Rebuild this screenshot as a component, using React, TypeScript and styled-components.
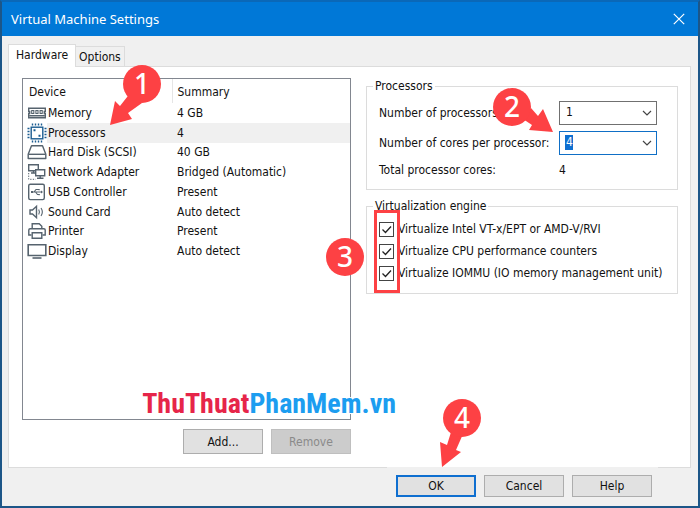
import React from "react";
import styled, { createGlobalStyle, css } from "styled-components";

const uiFont = `"DejaVu Sans Condensed", "Noto Sans", sans-serif`;
const titleFont = `"Noto Sans", "Open Sans", sans-serif`;
const red = "#fd4144";

const GlobalStyle = createGlobalStyle`
  * { box-sizing: border-box; }
  body {
    margin: 0;
    background: #1c5688;
    color: #111;
    font: 12px/16px ${uiFont};
  }
  button, select, input { font: inherit; color: inherit; }
`;

const Dialog = styled.main`
  display: flex;
  flex-direction: column;
  min-height: 100vh;
  border: 2px solid #1c5688;
  border-top-color: #0a68b8;
  background: #f0f0f0;
`;

const TitleBar = styled.header`
  display: flex;
  align-items: center;
  justify-content: space-between;
  height: 34px;
  padding: 0 13px 0 9px;
  background: #0078d7;
  color: #fff;
`;

const Title = styled.h1`
  margin: 0;
  font: 400 13px/20px ${titleFont};
`;

const CloseButton = styled.button`
  display: flex;
  padding: 0;
  border: 0;
  background: none;
  color: #fff;
`;

const Body = styled.div`
  display: flex;
  flex: 1;
  flex-direction: column;
  padding: 8px 7px 9px 6px;
`;

const TabList = styled.div`
  display: flex;
  align-items: flex-end;
  height: 22px;
`;

const Tab = styled.button<{ $active?: boolean }>`
  height: 20px;
  padding: 0 3px;
  border: 1px solid #dcdcdc;
  border-left: 0;
  border-bottom: 0;
  background: #f0f0f0;
  ${(p) =>
    p.$active &&
    css`
      z-index: 1;
      height: 23px;
      margin-bottom: -1px;
      padding: 0 7px 2px;
      border-left: 1px solid #dcdcdc;
      background: #fff;
    `}
`;

const TabPanel = styled.section`
  display: grid;
  flex: 1;
  grid-template-columns: minmax(0, 329fr) minmax(0, 312fr);
  column-gap: 15px;
  padding: 12px 12px 13px 13px;
  border: 1px solid #dcdcdc;
  border-top: 0;
  background: #fff;
  box-shadow: inset 0 1px #dcdcdc;
`;

const DevicePane = styled.div`
  display: flex;
  flex-direction: column;
`;

const DeviceList = styled.div`
  position: relative;
  flex: 1;
  border: 1px solid #828790;
`;

const DeviceTable = styled.table`
  width: 100%;
  border-collapse: collapse;
  table-layout: fixed;
`;

const HeadCell = styled.th`
  height: 24px;
  padding: 2px 0 0 5px;
  font-weight: 400;
  text-align: left;
  &:first-child {
    width: 149px;
    padding-left: 6px;
    border-right: 1px solid #e5e5e5;
  }
`;

const DeviceRows = styled.tbody`
  height: 158px;
`;

const DeviceCell = styled.td<{ $selected: boolean }>`
  position: relative;
  padding: 0 0 0 4px;
  background: ${(p) =>
    p.$selected ? "linear-gradient(to right, transparent 24px, #f0f0f0 24px)" : "none"};
`;

const SummaryCell = styled.td<{ $selected: boolean }>`
  padding: 0 0 0 5px;
  background: ${(p) => (p.$selected ? "#f0f0f0" : "none")};
`;

const DeviceName = styled.div`
  display: flex;
  align-items: center;
  gap: 1px;
  height: 16px;
`;

const DeviceIcon = styled.svg`
  flex: none;
  width: 20px;
  height: 20px;
  fill: none;
  stroke: #56636e;
  stroke-width: 1.4;
`;

const Watermark = styled.div`
  position: absolute;
  right: -46px;
  bottom: -1px;
  color: #1c9df0;
  font: 700 28px/32px "Roboto Condensed", "Liberation Sans Narrow", Roboto, sans-serif;
  text-shadow: 1px 0 #fff, -1px 0 #fff, 0 1px #fff, 0 -1px #fff;
  white-space: nowrap;
`;

const WatermarkLead = styled.span`
  color: #e62549;
`;

const ButtonRow = styled.div`
  display: flex;
  justify-content: flex-end;
  gap: 8px;
`;

const DeviceActions = styled(ButtonRow)`
  margin-top: 9px;
`;

const PushButton = styled.button<{ $primary?: boolean }>`
  width: 80px;
  height: 22px;
  padding: 0;
  border: ${(p) => (p.$primary ? "2px solid #0f6fd0" : "1px solid #adadad")};
  background: #e1e1e1;
  &:disabled {
    border-color: #bfbfbf;
    background: #ccc;
    color: #8a8a8a;
  }
  ${DeviceActions} & {
    height: 25px;
  }
`;

const Settings = styled.div`
  display: flex;
  flex-direction: column;
  gap: 8px;
`;

const Group = styled.fieldset`
  min-width: 0;
  margin: 0;
  padding: 7px 20px 10px 12px;
  border: 1px solid #dcdcdc;
`;

const Legend = styled.legend`
  margin-left: -6px;
  padding: 0 2px;
`;

const Fields = styled.div`
  display: grid;
  grid-template-columns: 1fr 98px;
  align-items: center;
  row-gap: 6px;
`;

const FieldLabel = styled.label`
  white-space: nowrap;
`;

const Total = styled.output`
  line-height: 18px;
`;

const SelectWrap = styled.div`
  position: relative;
  display: grid;
`;

const Select = styled.select<{ $focused?: boolean }>`
  appearance: none;
  width: 100%;
  height: 24px;
  padding: 0 20px 2px 6px;
  border: 1px solid #707070;
  border-radius: 0;
  background: #fff;
  outline: 0;
  ${(p) =>
    p.$focused &&
    css`
      border-color: #0f6fc6;
      background: #fff linear-gradient(#0f6fd0, #0f6fd0) 5px 3px / 8px 15px no-repeat;
      color: #fff;
    `}
`;

const Chevron = styled.svg`
  position: absolute;
  top: 8px;
  right: 5px;
  width: 10px;
  height: 8px;
  pointer-events: none;
`;

const Checks = styled.div`
  position: relative;
  display: flex;
  flex-direction: column;
  gap: 6px;
  padding-bottom: 2px;
`;

const CheckRow = styled.label`
  display: flex;
  align-items: center;
  gap: 4px;
  white-space: nowrap;
`;

const CheckBox = styled.input`
  appearance: none;
  flex: none;
  width: 15px;
  height: 15px;
  margin: 0;
  border: 1px solid #444;
  background: #fff
    url("data:image/svg+xml,%3Csvg xmlns='http://www.w3.org/2000/svg' viewBox='0 0 13 13'%3E%3Cpath d='M2.5 6.5l3 3 5.5-6' fill='none' stroke='%23222' stroke-width='1.3'/%3E%3C/svg%3E");
`;

const CheckFrame = styled.div`
  position: absolute;
  top: -11px;
  left: -5px;
  width: 26px;
  height: 83px;
  border: 3px solid ${red};
  pointer-events: none;
`;

const Footer = styled(ButtonRow)`
  align-self: flex-end;
  margin: -1px 33px 0 0;
  padding: 8px 6px 0 9px;
  background: #f0f0f0;
`;

const OkWrap = styled.div`
  position: relative;
  display: flex;
`;

const MarkerSvg = styled.svg<{ $left: number; $top: number }>`
  position: absolute;
  z-index: 2;
  left: ${(p) => p.$left}px;
  top: ${(p) => p.$top}px;
  overflow: visible;
  pointer-events: none;
  fill: ${red};
`;

const MarkerDigit = styled.text`
  fill: #fff;
  font: 500 28px ${titleFont};
  text-anchor: middle;
`;

type MarkerProps = { n: number; left: number; top: number; arrow?: string };

const Marker = ({ n, left, top, arrow }: MarkerProps) => (
  <MarkerSvg $left={left} $top={top} width="38" height="38" viewBox="0 0 38 38">
    {arrow && <path d={arrow} />}
    <circle cx="19" cy="19" r="19" />
    <MarkerDigit x="19" y="29">{n}</MarkerDigit>
  </MarkerSvg>
);

const icons: Record<string, React.ReactNode> = {
  Memory: (
    <>
      <path d="M1 5.2h18M1.7 5v3.5h1v2h-1v4M18.3 5v3.5h-1v2h1v4M1 14.8h18M2.5 12.8h15" />
      <path d="M4.7 7.5h2.1v3H4.7zM8.9 7.5H11v3H8.9zM13.1 7.5h2.1v3h-2.1z" strokeWidth="1.1" />
    </>
  ),
  Processors: (
    <g stroke="#1b5c91">
      <rect x="4.2" y="4.2" width="11.6" height="11.6" />
      <path d="M5.5.5v2M8.5.5v2M11.5.5v2M14.5.5v2M5.5 17.5v2M8.5 17.5v2M11.5 17.5v2M14.5 17.5v2M.5 5.5h2M.5 8.5h2M.5 11.5h2M.5 14.5h2M17.5 5.5h2M17.5 8.5h2M17.5 11.5h2M17.5 14.5h2" />
      <path d="M6.5 7.3h2M11.5 12.7h2" strokeWidth="2" />
    </g>
  ),
  "Hard Disk (SCSI)": (
    <>
      <path d="M4.5 3.7h11l3.3 8.5v4.3H1.2v-4.3z" strokeLinejoin="round" />
      <path d="M1.5 12.3h17" />
    </>
  ),
  "Network Adapter": (
    <>
      <path d="M1.7 2.7h9.6v6H1.7zM4 11h4M6.5 9v2" />
      <path d="M8.7 7.7h9v6h-9z" fill="#fff" />
      <path d="M13.2 14v2M10 16.3h6.5" />
      <path d="M1.7 11v6.3h7" strokeDasharray="1.3 1.3" strokeWidth="1" />
    </>
  ),
  "USB Controller": (
    <>
      <rect x="1.7" y="2.2" width="15.6" height="15.4" rx="1.5" />
      <path d="M4.5 10h10M7 10l2-2.5h3M8.5 10l2 2.5h2" strokeWidth="1.1" />
      <path d="M4 9h2v2H4zM14 8.5l2 1.5-2 1.5zM11.5 7h1.2v1.2h-1.2zM11.5 12h1.2v1.2h-1.2z" fill="#56636e" stroke="none" />
    </>
  ),
  "Sound Card": (
    <>
      <path d="M3 8h2.5l4-3.7v11.4l-4-3.7H3z" />
      <path d="M11.7 7.5q1.5 2.5 0 5M14 6q2.7 4 0 8" strokeWidth="1.1" />
    </>
  ),
  Printer: (
    <>
      <path d="M5.2 7.5V2.7h7l2.6 2.5v2.3M4.5 14H1.8V9q0-1.3 1.3-1.3h13.8q1.3 0 1.3 1.3v5h-2.7" />
      <path d="M5.2 11.7h9.6v5.6H5.2z" />
    </>
  ),
  Display: (
    <>
      <path d="M1.2 3.7h17.6v10.8H1.2z" strokeWidth="1.6" />
      <path d="M5.5 17h9" strokeWidth="1.6" />
    </>
  ),
};

const devices = [
  ["Memory", "4 GB"],
  ["Processors", "4"],
  ["Hard Disk (SCSI)", "40 GB"],
  ["Network Adapter", "Bridged (Automatic)"],
  ["USB Controller", "Present"],
  ["Sound Card", "Auto detect"],
  ["Printer", "Present"],
  ["Display", "Auto detect"],
];

const engineOptions = [
  "Virtualize Intel VT-x/EPT or AMD-V/RVI",
  "Virtualize CPU performance counters",
  "Virtualize IOMMU (IO memory management unit)",
];

const counts = [1, 2, 4, 8];

type CountSelectProps = { id: string; value: number; focused?: boolean; children?: React.ReactNode };

const CountSelect = ({ id, value, focused, children }: CountSelectProps) => (
  <SelectWrap>
    <Select id={id} defaultValue={value} $focused={focused}>
      {counts.map((c) => (
        <option key={c}>{c}</option>
      ))}
    </Select>
    <Chevron viewBox="0 0 10 8" aria-hidden="true">
      <path d="M1 2l4 4 4-4" fill="none" stroke="#444" strokeWidth="1.2" />
    </Chevron>
    {children}
  </SelectWrap>
);

export default function App() {
  return (
    <>
      <GlobalStyle />
      <Dialog>
        <TitleBar>
          <Title>Virtual Machine Settings</Title>
          <CloseButton aria-label="Close">
            <svg width="12" height="12" viewBox="0 0 12 12">
              <path d="M.8.8l10.4 10.4M11.2.8L.8 11.2" stroke="currentColor" strokeWidth="1.2" />
            </svg>
          </CloseButton>
        </TitleBar>
        <Body>
          <TabList role="tablist">
            <Tab role="tab" aria-selected="true" $active>Hardware</Tab>
            <Tab role="tab" aria-selected="false">Options</Tab>
          </TabList>
          <TabPanel role="tabpanel">
            <DevicePane>
              <DeviceList>
                <DeviceTable>
                  <thead>
                    <tr>
                      <HeadCell>Device</HeadCell>
                      <HeadCell>Summary</HeadCell>
                    </tr>
                  </thead>
                  <DeviceRows>
                    {devices.map(([name, summary]) => {
                      const selected = name === "Processors";
                      return (
                        <tr key={name}>
                          <DeviceCell $selected={selected}>
                            <DeviceName>
                              <DeviceIcon viewBox="0 0 20 20" aria-hidden="true">{icons[name]}</DeviceIcon>
                              {name}
                            </DeviceName>
                            {selected && (
                              <Marker n={1} left={100} top={-58} arrow="M-13 60L-8 36L-3 41L8 27L19 38L5 48L9 54z" />
                            )}
                          </DeviceCell>
                          <SummaryCell $selected={selected}>{summary}</SummaryCell>
                        </tr>
                      );
                    })}
                  </DeviceRows>
                </DeviceTable>
                <Watermark>
                  <WatermarkLead>ThuThuat</WatermarkLead>PhanMem.vn
                </Watermark>
              </DeviceList>
              <DeviceActions>
                <PushButton>Add...</PushButton>
                <PushButton disabled>Remove</PushButton>
              </DeviceActions>
            </DevicePane>
            <Settings>
              <Group>
                <Legend>Processors</Legend>
                <Fields>
                  <FieldLabel htmlFor="processors">Number of processors:</FieldLabel>
                  <CountSelect id="processors" value={1} />
                  <FieldLabel htmlFor="cores">Number of cores per processor:</FieldLabel>
                  <CountSelect id="cores" value={4} focused>
                    <Marker n={2} left={-66} top={-43} arrow="M60 44L36 42L39 37L30 31L38 20L45 28L50 21z" />
                  </CountSelect>
                  <FieldLabel htmlFor="total">Total processor cores:</FieldLabel>
                  <Total id="total">4</Total>
                </Fields>
              </Group>
              <Group>
                <Legend>Virtualization engine</Legend>
                <Checks>
                  {engineOptions.map((label) => (
                    <CheckRow key={label}>
                      <CheckBox type="checkbox" defaultChecked />
                      {label}
                    </CheckRow>
                  ))}
                  <CheckFrame />
                  <Marker n={3} left={-53} top={17} />
                </Checks>
              </Group>
            </Settings>
          </TabPanel>
          <Footer>
            <OkWrap>
              <PushButton $primary>OK</PushButton>
              <Marker n={4} left={47} top={-76} arrow="M-1 68L-3 43L4 46L9 30L20 35L13 51L18 53z" />
            </OkWrap>
            <PushButton>Cancel</PushButton>
            <PushButton>Help</PushButton>
          </Footer>
        </Body>
      </Dialog>
    </>
  );
}
